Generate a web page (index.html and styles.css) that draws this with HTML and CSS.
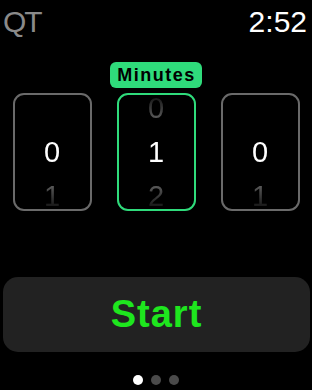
FILE: index.html
```html
<!DOCTYPE html>
<html>
<head>
<meta charset="utf-8">
<link rel="stylesheet" href="styles.css">
</head>
<body>
<div class="screen">
  <header class="status">
    <span class="app">QT</span>
    <span class="time">2:52</span>
  </header>
  <section class="picker">
    <div class="label">Minutes</div>
    <div class="wheel col1">
      <div class="digits">
        <span class="d side"></span>
        <span class="d cur">0</span>
        <span class="d side">1</span>
      </div>
    </div>
    <div class="wheel col2 active">
      <div class="digits">
        <span class="d side">0</span>
        <span class="d cur">1</span>
        <span class="d side">2</span>
      </div>
    </div>
    <div class="wheel col3">
      <div class="digits">
        <span class="d side"></span>
        <span class="d cur">0</span>
        <span class="d side">1</span>
      </div>
    </div>
  </section>
  <button class="start">Start</button>
  <div class="dots">
    <span class="dot on"></span>
    <span class="dot"></span>
    <span class="dot"></span>
  </div>
</div>
</body>
</html>
```
FILE: styles.css
```css
html, body {
  margin: 0;
  padding: 0;
  background: #000;
}
.screen {
  width: 312px;
  height: 390px;
  display: flex;
  flex-direction: column;
  font-family: "Liberation Sans", Arial, sans-serif;
  color: #fff;
  overflow: hidden;
}
.status {
  display: flex;
  justify-content: space-between;
  align-items: baseline;
  padding: 4px 5px 0 3px;
  height: 36px;
  font-size: 30px;
  line-height: 36px;
}
.app {
  color: #8a8a8a;
  letter-spacing: -2px;
}
.time {
  color: #fff;
}
.picker {
  margin-top: 22px;
  display: grid;
  grid-template-columns: repeat(3, 79px);
  grid-template-rows: 26px 118px;
  column-gap: 25px;
  row-gap: 5px;
  justify-content: center;
}
.label {
  grid-column: 2;
  grid-row: 1;
  justify-self: center;
  background: #2fdb7b;
  color: #000;
  font-weight: bold;
  font-size: 18px;
  line-height: 26px;
  letter-spacing: 1.5px;
  padding: 0 6px 0 7px;
  border-radius: 6px;
}
.wheel {
  grid-row: 2;
  box-sizing: border-box;
  border: 2px solid #6a6a6a;
  border-radius: 11px;
  overflow: hidden;
  display: flex;
  flex-direction: column;
  justify-content: center;
}
.col1 { grid-column: 1; }
.col2 { grid-column: 2; }
.col3 { grid-column: 3; }
.wheel.active {
  border: 2.5px solid #2fdb7b;
}
.digits {
  display: flex;
  flex-direction: column;
  justify-content: center;
  align-items: center;
  height: 100%;
  -webkit-mask-image: linear-gradient(to bottom, rgba(0,0,0,0.15) 2%, #000 38%, #000 62%, rgba(0,0,0,0.15) 98%);
  mask-image: linear-gradient(to bottom, rgba(0,0,0,0.15) 2%, #000 38%, #000 62%, rgba(0,0,0,0.15) 98%);
}
.d {
  flex: none;
  height: 44px;
  line-height: 44px;
  font-size: 29px;
}
.d.cur { color: #fff; }
.d.side { color: #9a9a9a; }
.start {
  margin: 66px 2px 0 3px;
  height: 75px;
  border: none;
  border-radius: 15px;
  background: #222;
  color: #1ee61e;
  font-family: "Liberation Sans", Arial, sans-serif;
  font-weight: bold;
  font-size: 38px;
  letter-spacing: 1px;
  padding: 0;
}
.dots {
  margin-top: 23px;
  display: flex;
  justify-content: center;
  gap: 8px;
}
.dot {
  width: 10px;
  height: 10px;
  border-radius: 50%;
  background: #4a4a4a;
}
.dot.on { background: #fff; }
```
